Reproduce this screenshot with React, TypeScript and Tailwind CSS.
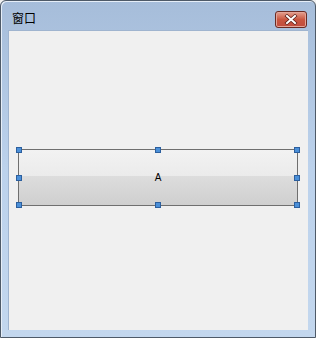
export default function App() {
  const handles = [
    'left-[-3px] top-[-3px]',
    'left-[136px] top-[-3px]',
    'right-[-3px] top-[-3px]',
    'left-[-3px] top-[25px]',
    'right-[-3px] top-[25px]',
    'left-[-3px] bottom-[-3px]',
    'left-[136px] bottom-[-3px]',
    'right-[-3px] bottom-[-3px]',
  ];

  return (
    <div className="w-[316px] h-[338px] bg-[#f0f0f0]">
      <div className="w-[316px] h-[338px] flex flex-col border border-[#4e5a68] rounded-t-[6px] bg-gradient-to-b from-[#a6bdda] via-[#bcd2ec] to-[#c3d7ee] shadow-[inset_1px_1px_0_#e6eef8]">
        {/* title bar */}
        <div className="h-[29px] flex items-start justify-between pl-[11px] pr-[8px] pt-[9px]">
          <span className="text-[12px] leading-[16px] text-black" style={{ fontFamily: '"Noto Sans CJK SC", sans-serif' }}>
            窗口
          </span>
          <button className="w-[32px] h-[17px] mt-[1px] rounded-[3px] border border-[#6b2a22] bg-gradient-to-b from-[#e3a090] via-[#c9563f] to-[#c14c3e] flex items-center justify-center shadow-[inset_0_0_0_1px_#e3a598]">
            <svg width="14" height="11" viewBox="0 0 14 11">
              <path d="M3 2 L11 9 M11 2 L3 9" stroke="#5a1c14" strokeWidth="3.4" strokeLinecap="square" />
              <path d="M3 2 L11 9 M11 2 L3 9" stroke="#ffffff" strokeWidth="2" strokeLinecap="square" />
            </svg>
          </button>
        </div>
        {/* client area */}
        <div className="flex-1 ml-[7px] mr-[7px] mb-[7px] bg-[#f0f0f0] border-t border-l border-[#9fb4cf] pl-[9px] pt-[118px]">
          <div className="relative w-[280px] h-[57px] border border-[#6f6f6f] flex flex-col">
            <div className="h-[26px] bg-gradient-to-b from-[#f2f2f2] to-[#ebebeb]" />
            <div className="flex-1 bg-gradient-to-b from-[#dddddd] to-[#cfcfcf]" />
            <span
              className="absolute inset-0 flex items-center justify-center text-[10px] leading-none text-black"
              style={{ fontFamily: '"Liberation Sans", sans-serif' }}
            >
              A
            </span>
            {handles.map((h, i) => (
              <div key={i} className={`absolute w-[6px] h-[6px] bg-[#4a8fd8] border border-[#2c5f9e] ${h}`} />
            ))}
          </div>
        </div>
      </div>
    </div>
  );
}
